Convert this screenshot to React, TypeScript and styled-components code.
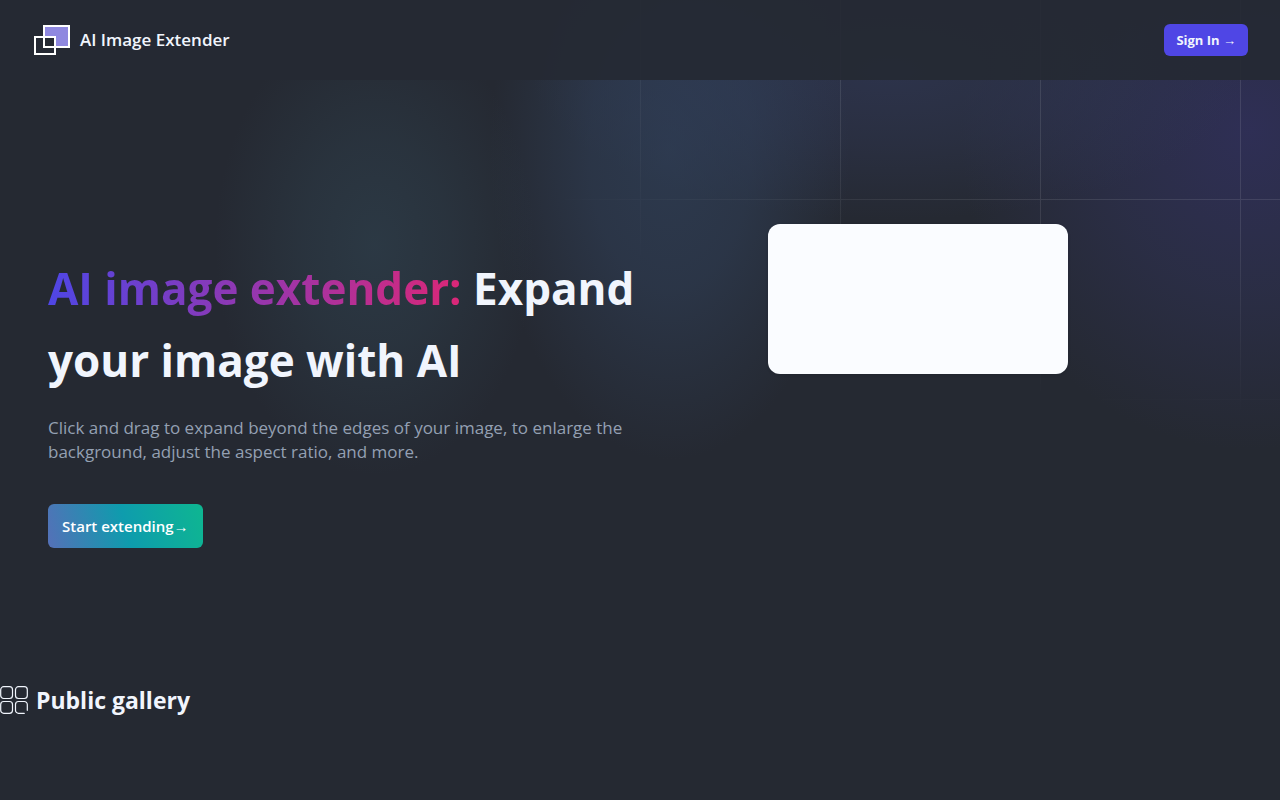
import React from 'react';
import styled, { createGlobalStyle } from 'styled-components';

const GlobalStyle = createGlobalStyle`
  *, *::before, *::after { box-sizing: border-box; }
  body {
    margin: 0;
    background: #252932;
    color: #f1f5fd;
    font-family: 'Open Sans', 'Noto Sans', sans-serif;
  }
  h1, h2, p { margin: 0; }
`;

const Page = styled.div`
  position: relative;
  isolation: isolate;
  min-height: 100vh;
  background-color: #252932;
  background-repeat: no-repeat;
  background-image:
    radial-gradient(ellipse 160px 230px at 375px 245px, rgba(50, 72, 86, 0.5), rgba(50, 72, 86, 0.32) 45%, transparent),
    radial-gradient(ellipse 180px 310px at 670px 150px, rgba(50, 68, 96, 0.6), rgba(50, 68, 96, 0.45) 45%, transparent),
    radial-gradient(ellipse 360px 150px at 890px 70px, rgba(50, 58, 92, 0.6), rgba(50, 58, 92, 0.35) 50%, transparent),
    radial-gradient(ellipse 290px 320px at calc(100% - 30px) 130px, rgba(52, 50, 104, 0.65), rgba(50, 52, 96, 0.42) 50%, transparent);
`;

const GridLines = styled.svg`
  position: absolute;
  inset: 0;
  z-index: -1;
  width: 100%;
  height: 600px;
  stroke: rgba(255, 255, 255, 0.1);
  fill: none;
  mask-image: radial-gradient(ellipse 840px 420px at top right, white, white 55%, transparent);
`;

const Header = styled.header`
  display: flex;
  align-items: center;
  justify-content: space-between;
  height: 80px;
  padding: 0 32px;
  background: rgba(37, 41, 51, 0.92);
`;

const Brand = styled.a`
  display: flex;
  align-items: center;
  gap: 8px;
  color: inherit;
  font-size: 17px;
  line-height: 28px;
  font-weight: 600;
  text-decoration: none;
`;

const SignIn = styled.button`
  height: 32px;
  padding: 0 12px;
  border: 0;
  border-radius: 6px;
  background: #4f46e5;
  color: #f1f5fd;
  font: 700 13px/20px 'Open Sans', 'Noto Sans', sans-serif;
  white-space: nowrap;
`;

const Hero = styled.section`
  display: grid;
  grid-template-columns: minmax(0, 1fr) 464px;
  gap: 128px;
  align-items: start;
  padding: 144px 48px 132px;
`;

const Copy = styled.div`
  padding-top: 28px;
`;

const Title = styled.h1`
  font-size: 44px;
  line-height: 72px;
  font-weight: 700;
`;

const Highlight = styled.span`
  background: linear-gradient(to right, #4f46e5, #db2777);
  background-clip: text;
  color: transparent;
`;

const Lead = styled.p`
  margin-top: 20px;
  color: #94a0b3;
  font-size: 17px;
  line-height: 24px;
`;

const StartButton = styled.button`
  height: 44px;
  margin-top: 40px;
  padding: 0 14px;
  border: 0;
  border-radius: 6px;
  background: linear-gradient(75deg, #5570b8, #0e9cad 50%, #0eb691);
  color: #fff;
  font: 600 15px/24px 'Open Sans', 'Noto Sans', sans-serif;
  white-space: nowrap;
`;

const Preview = styled.div`
  width: 300px;
  height: 150px;
  border-radius: 12px;
  background: #fafcff;
  box-shadow: 0 1px 3px rgba(15, 18, 28, 0.2);
`;

const GalleryHeading = styled.h2`
  display: flex;
  align-items: center;
  gap: 8px;
  font-size: 23px;
  line-height: 40px;
  font-weight: 700;
`;

const LogoMark = () => (
  <svg width="40" height="40" viewBox="0 0 40 40" fill="none" stroke="#fff" strokeWidth="2" aria-hidden="true">
    <rect x="12" y="6" width="25" height="21" fill="#8f88e0" />
    <path d="M12 17h11v10H12z" fill="#252932" />
    <path d="M3 17h20v17H3zM12 17v10h11" />
  </svg>
);

const GalleryIcon = () => (
  <svg width="28" height="28" viewBox="0 0 28 28" fill="none" stroke="#f1f5fd" strokeWidth="1.2" strokeLinecap="round" aria-hidden="true">
    <rect x="0.7" y="0.7" width="11.8" height="11.8" rx="3" />
    <rect x="15.5" y="0.7" width="11.8" height="11.8" rx="3" />
    <rect x="0.7" y="15.5" width="11.8" height="11.8" rx="3" />
    <path d="M27.3 24.3v-5.8a3 3 0 0 0-3-3h-5.8a3 3 0 0 0-3 3v5.8a3 3 0 0 0 3 3h5.8" />
  </svg>
);

export default function App() {
  return (
    <>
      <GlobalStyle />
      <Page>
        <GridLines aria-hidden="true">
          <defs>
            <pattern id="hero-grid" width="200" height="200" x="50%" y="-1" patternUnits="userSpaceOnUse">
              <path d="M.5 200V.5H200" />
            </pattern>
          </defs>
          <rect width="100%" height="100%" stroke="none" fill="url(#hero-grid)" />
        </GridLines>
        <Header>
          <Brand href="#">
            <LogoMark />
            AI Image Extender
          </Brand>
          <SignIn type="button">Sign In →</SignIn>
        </Header>
        <main>
          <Hero>
            <Copy>
              <Title>
                <Highlight>AI image extender:</Highlight> Expand your image with AI
              </Title>
              <Lead>
                Click and drag to expand beyond the edges of your image, to enlarge the background, adjust the
                aspect ratio, and more.
              </Lead>
              <StartButton type="button">Start extending→</StartButton>
            </Copy>
            <Preview />
          </Hero>
          <GalleryHeading>
            <GalleryIcon />
            Public gallery
          </GalleryHeading>
        </main>
      </Page>
    </>
  );
}
